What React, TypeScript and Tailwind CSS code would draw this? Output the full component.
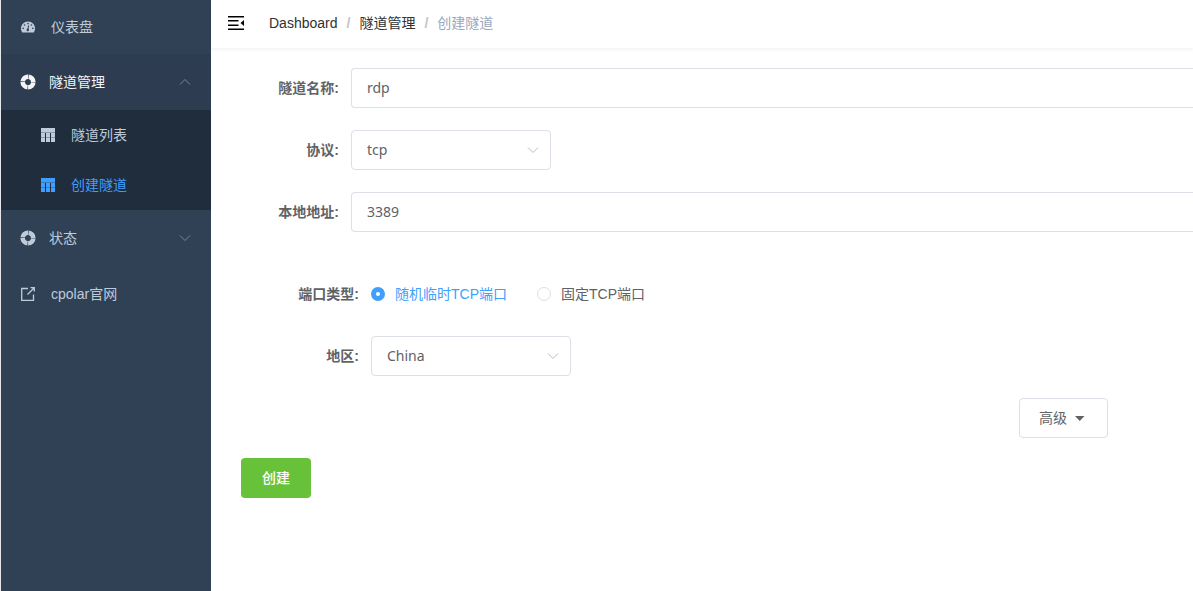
import { useState } from 'react';
import type { ReactNode } from 'react';
import clsx from 'clsx';

type IconProps = { className?: string };

function DashboardIcon({ className }: IconProps) {
  return (
    <svg viewBox="0 0 128 100" className={className} aria-hidden="true">
      <path
        fill="currentColor"
        d="M0 63.6C0 28.5 28.7 0 64 0s64 28.5 64 63.6c0 12.5-3.4 24-10.2 34.6-.9 1.2-2.2 1.8-3.8 1.8H14c-1.6 0-2.9-.6-3.8-1.8C3.4 87.7 0 76.2 0 63.6z"
      />
      <g fill="#304156">
        <circle cx="20" cy="62" r="7.5" />
        <circle cx="33" cy="32" r="7.5" />
        <circle cx="64" cy="19" r="7.5" />
        <circle cx="95" cy="32" r="7.5" />
        <circle cx="108" cy="62" r="7.5" />
        <circle cx="62" cy="77" r="11" />
        <path d="M57 68l9-30c.7-2.400 2.600-3.800 5-3.200 2.400.6 3.900 3 3.300 5.500L67 70z" />
      </g>
    </svg>
  );
}

function HelpIcon({ className }: IconProps) {
  return (
    <svg viewBox="0 0 16 16" className={className} aria-hidden="true">
      <circle cx="8" cy="8" r="5.300" fill="none" stroke="currentColor" strokeWidth="4.600" strokeDasharray="7.725 .6" strokeDashoffset="-.3" />
    </svg>
  );
}

function GridIcon({ className }: IconProps) {
  return (
    <svg viewBox="0 0 14 14" className={className} aria-hidden="true" fill="currentColor">
      <path d="M0 0h14v4H0zM0 5h4v4H0zM5 5h4v4H5zM10 5h4v4h-4zM0 10h4v4H0zM5 10h4v4H5zM10 10h4v4h-4z" />
      <path opacity=".7" d="M0 4h14v1H0zM0 9h4v1H0zM5 9h4v1H5zM10 9h4v1h-4z" />
    </svg>
  );
}

function LinkIcon({ className }: IconProps) {
  return (
    <svg viewBox="0 0 14 14" className={className} aria-hidden="true" fill="none" stroke="currentColor" strokeWidth="1.300">
      <path d="M7 1.500H.7v11.800h11.800V7.500M6.500 7.500L13 1M9.500.7h3.800V4.500" />
    </svg>
  );
}

function FoldIcon({ className }: IconProps) {
  return (
    <svg viewBox="0 0 16 14" className={className} aria-hidden="true" fill="currentColor">
      <path d="M0 0h16v1.500H0zM0 4h10.500v1.500H0zM0 8.500h10.500V10H0zM0 12.500h16V14H0zM16 4v6l-3.500-3z" />
    </svg>
  );
}

function Chevron({ className }: IconProps) {
  return (
    <svg viewBox="0 0 12 12" className={className} aria-hidden="true" fill="none" stroke="currentColor">
      <path d="M1 3.500l5 5 5-5" />
    </svg>
  );
}

const subItems = [
  { name: '隧道列表', href: '#list' },
  { name: '创建隧道', href: '#create' },
];

function Sidebar() {
  const [open, setOpen] = useState(true);

  return (
    <aside className="w-[211px] shrink-0 border-l border-gray-200 bg-[#304156] text-[#bfcbd9]">
      <nav>
        <a href="#dashboard" className="flex h-[54px] items-center gap-4 px-5">
          <DashboardIcon className="h-3 w-3.5" />
          仪表盘
        </a>
        <button
          type="button"
          aria-expanded={open}
          onClick={() => setOpen((v) => !v)}
          className="flex h-14 w-full items-center bg-[#2d3c50] px-5 text-left text-[#f4f4f5]"
        >
          <HelpIcon className="-ml-px mr-[13px] h-4 w-4" />
          隧道管理
          <Chevron className={clsx('ml-auto h-3 w-3 text-[#7d858f]', open && 'rotate-180')} />
        </button>
        {open && (
          <div className="bg-[#1f2d3d]">
            {subItems.map(({ name, href }) => (
              <a
                key={name}
                href={href}
                className={clsx('flex h-[50px] items-center gap-4 px-10', href === '#create' && 'text-[#409eff]')}
              >
                <GridIcon className="h-3.5 w-3.5" />
                {name}
              </a>
            ))}
          </div>
        )}
        <button type="button" aria-expanded={false} className="flex h-14 w-full items-center px-5 text-left">
          <HelpIcon className="-ml-px mr-[13px] h-4 w-4" />
          状态
          <Chevron className="ml-auto h-3 w-3 text-[#7d858f]" />
        </button>
        <a href="#cpolar" className="flex h-14 items-center gap-4 px-5">
          <LinkIcon className="h-3.5 w-3.5" />
          cpolar官网
        </a>
      </nav>
    </aside>
  );
}

function Field({ id, label, children }: { id: string; label: string; children: ReactNode }) {
  return (
    <div className="flex h-10 items-center">
      <label htmlFor={id} className="w-[110px] shrink-0 pr-3 text-right font-bold">
        {label}:
      </label>
      {children}
    </div>
  );
}

const inputFont = "font-['Noto_Sans','Noto_Sans_CJK_SC',sans-serif]";

function TextInput({ id, value }: { id: string; value: string }) {
  return (
    <input
      id={id}
      type="text"
      defaultValue={value}
      className={clsx(
        "h-10 min-w-0 flex-1 rounded-l border border-r-0 border-[#dcdfe6] bg-white px-[15px] pb-0.5 outline-none focus:border-[#409eff]",
        inputFont,
      )}
    />
  );
}

function Select({ id, options }: { id: string; options: string[] }) {
  return (
    <div className="relative w-[200px]">
      <select
        id={id}
        className={clsx(
          'h-10 w-full appearance-none rounded border border-[#dcdfe6] bg-white px-[15px] outline-none focus:border-[#409eff]',
          inputFont,
        )}
      >
        {options.map((o) => (
          <option key={o}>{o}</option>
        ))}
      </select>
      <Chevron className="pointer-events-none absolute top-3.5 right-3 h-3 w-3 text-[#b4bccc]" />
    </div>
  );
}

const portTypes = ['随机临时TCP端口', '固定TCP端口'];

function PortType() {
  const [selected, setSelected] = useState(portTypes[0]);

  return (
    <div className="flex h-10 items-center" role="radiogroup" aria-labelledby="port-type">
      <span id="port-type" className="w-[110px] shrink-0 pr-3 text-right font-bold">
        端口类型:
      </span>
      <div className="flex gap-[30px]">
        {portTypes.map((type) => (
          <label key={type} className={clsx('flex items-center gap-2.5', selected === type && 'text-[#409eff]')}>
            <input
              type="radio"
              name="port-type"
              checked={selected === type}
              onChange={() => setSelected(type)}
              className="h-3.5 w-3.5 appearance-none rounded-full border border-[#dcdfe6] bg-white checked:border-5 checked:border-[#409eff]"
            />
            {type}
          </label>
        ))}
      </div>
    </div>
  );
}

export default function App() {
  return (
    <div className="flex min-h-screen bg-white font-['Liberation_Sans','Noto_Sans_CJK_SC',sans-serif] text-sm text-[#606266]">
      <Sidebar />
      <div className="min-w-0 flex-1">
        <header className="flex h-12 items-center px-[17px] pb-0.5 text-[#303133] shadow-[0_1px_4px_rgba(0,21,41,0.08)]">
          <button type="button" aria-label="Toggle sidebar" className="mr-[25px] text-black">
            <FoldIcon className="h-3.5 w-4" />
          </button>
          <nav aria-label="Breadcrumb" className="flex items-center gap-[9px]">
            <a href="#dashboard">Dashboard</a>
            <span className="font-bold text-[#c0c4cc]">/</span>
            <a href="#tunnels">隧道管理</a>
            <span className="font-bold text-[#c0c4cc]">/</span>
            <span className="text-[#97a8be]">创建隧道</span>
          </nav>
        </header>

        <form className="pt-5 pl-[30px]" onSubmit={(e) => e.preventDefault()}>
          <div className="flex flex-col gap-[22px]">
            <Field id="name" label="隧道名称">
              <TextInput id="name" value="rdp" />
            </Field>
            <Field id="protocol" label="协议">
              <Select id="protocol" options={['tcp', 'http', 'tls']} />
            </Field>
            <Field id="address" label="本地地址">
              <TextInput id="address" value="3389" />
            </Field>
            <div className="mt-5 flex flex-col gap-[22px] pl-5">
              <PortType />
              <Field id="region" label="地区">
                <Select id="region" options={['China', 'United States']} />
              </Field>
            </div>
          </div>
          <div className="mt-[22px] flex justify-end pr-[85px]">
            <button type="button" className="flex h-10 items-center gap-1.5 rounded border border-[#dcdfe6] pr-5 pl-[19px]">
              高级
              <svg viewBox="0 0 14 14" className="h-3.5 w-3.5" fill="currentColor" aria-hidden="true">
                <path d="M2 5h9.500L6.750 10z" />
              </svg>
            </button>
          </div>
          <button type="submit" className="mt-5 h-10 rounded bg-[#67c23a] px-[21px] font-medium text-white">
            创建
          </button>
        </form>
      </div>
    </div>
  );
}
